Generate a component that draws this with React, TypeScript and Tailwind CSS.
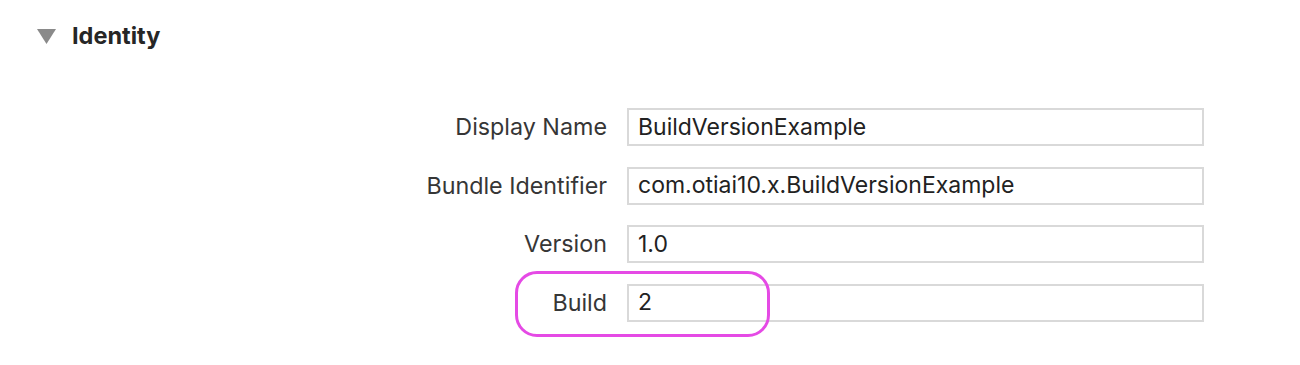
import React from "react";

const rows = [
  { label: "Display Name", value: "BuildVersionExample" },
  { label: "Bundle Identifier", value: "com.otiai10.x.BuildVersionExample" },
  { label: "Version", value: "1.0" },
  { label: "Build", value: "2" },
];

export default function App() {
  return (
    <div
      className="relative w-[1300px] h-[365px] bg-white"
      style={{ fontFamily: "Inter, 'Liberation Sans', sans-serif" }}
    >
      <div className="flex items-center pl-[37px] pt-[24px] h-[48px]">
        <svg width="19" height="15" viewBox="0 0 19 15" className="mr-[16px]">
          <polygon points="0,0 19,0 9.5,15" fill="#8a8a8a" />
        </svg>
        <span className="text-[23.5px] font-bold text-[#262626] leading-none">Identity</span>
      </div>
      <div className="flex flex-col pt-[60px] gap-[20.5px]">
        {rows.map((r) => (
          <div key={r.label} className="flex items-center h-[38px]">
            <div className="w-[607px] text-right text-[23.3px] text-[#363636] leading-none">
              {r.label}
            </div>
            <div className="ml-[20px] w-[577px] h-[38px] border-2 border-[#d9d9d9] flex items-center pl-[9px] text-[23px] text-[#222222] leading-none">
              {r.value}
            </div>
          </div>
        ))}
      </div>
      <div className="absolute left-[515px] top-[271px] w-[255px] h-[66px] rounded-[22px] border-[3px] border-[#e54ae5]" />
    </div>
  );
}
